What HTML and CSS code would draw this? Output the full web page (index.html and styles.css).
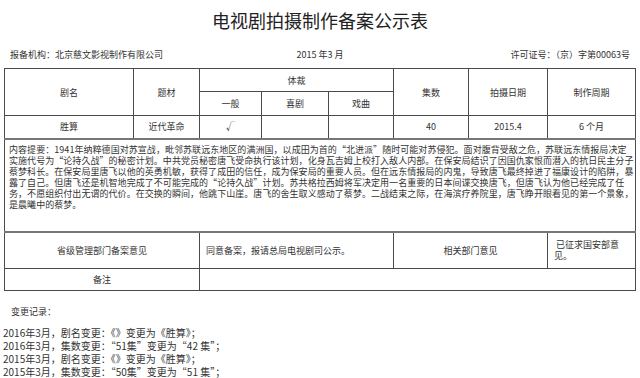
FILE: index.html
```html
<!DOCTYPE html>
<html>
<head>
<meta charset="utf-8">
<link rel="stylesheet" href="styles.css">
</head>
  <body>
    <div class="title">电视剧拍摄制作备案公示表</div>
    <div class="info">
      <span class="info-left">报备机构：北京慈文影视制作有限公司</span>
      <span class="info-mid">2015 年3 月</span>
      <span class="info-right">许可证号：（京）字第00063号</span>
    </div>
    <table class="record">
      <colgroup>
        <col class="c1"><col class="c2"><col class="c3"><col class="c4">
        <col class="c5"><col class="c6"><col class="c7"><col class="c8">
      </colgroup>
      <tr class="h1">
        <td rowspan="2">剧名</td>
        <td rowspan="2">题材</td>
        <td colspan="3">体裁</td>
        <td rowspan="2">集数</td>
        <td rowspan="2">拍摄日期</td>
        <td rowspan="2">制作周期</td>
      </tr>
      <tr class="h2">
        <td>一般</td>
        <td>喜剧</td>
        <td>戏曲</td>
      </tr>
      <tr class="data">
        <td>胜算</td>
        <td>近代革命</td>
        <td>√</td>
        <td></td>
        <td></td>
        <td>40</td>
        <td>2015.4</td>
        <td>6 个月</td>
      </tr>
      <tr class="summary">
        <td colspan="8">内容提要：1941年纳粹德国对苏宣战，毗邻苏联远东地区的满洲国，以成田为首的“北进派”随时可能对苏侵犯。面对腹背受敌之危，苏联远东情报局决定<br>实施代号为“论持久战”的秘密计划。中共党员秘密唐飞受命执行该计划，化身瓦吉姆上校打入敌人内部。在保安局结识了因国仇家恨而潜入的抗日民主分子<br>蔡梦科长。在保安局里唐飞以他的英勇机敏，获得了成田的信任，成为保安局的重要人员。但在远东情报局的内鬼，导致唐飞最终掉进了福康设计的陷阱，暴<br>露了自己。但唐飞还是机智地完成了不可能完成的“论持久战”计划。苏共格拉西姆将军决定用一名重要的日本间谍交换唐飞，但唐飞认为他已经完成了任<br>务，不愿组织付出无谓的代价。在交换的瞬间，他跳下山崖。唐飞的舍生取义感动了蔡梦。二战结束之际，在海滨疗养院里，唐飞睁开眼看见的第一个景象，<br>是晨曦中的蔡梦。</td>
      </tr>
      <tr class="opinion">
        <td colspan="2">省级管理部门备案意见</td>
        <td colspan="3" class="left">同意备案，报请总局电视剧司公示。</td>
        <td colspan="2">相关部门意见</td>
        <td class="left">&nbsp;已征求国安部意<br>见。</td>
      </tr>
      <tr class="note">
        <td colspan="2">备注</td>
        <td colspan="6"></td>
      </tr>
    </table>
    <div class="changes-head">变更记录：</div>
    <div class="changes">
      <p>2016年3月，剧名变更：《》变更为《胜算》；</p>
      <p>2016年3月，集数变更：“51集”变更为“42 集”；</p>
      <p>2015年3月，剧名变更：《》变更为《胜算》；</p>
      <p>2015年3月，集数变更：“50集”变更为“51 集”；</p>
    </div>
  </body>
</html>
```

FILE: styles.css
```css
body {
    margin: 0;
    background: #fff;
    color: #333;
    font-family: "Noto Sans CJK SC", "DejaVu Sans", sans-serif;
    font-size: 9px;
    line-height: 11px;
}

.title {
    padding-top: 9px;
    font-size: 18px;
    line-height: 22px;
    text-align: center;
    color: #222;
}

.info {
    display: grid;
    grid-template-columns: 1fr auto 1fr;
    margin-top: 17px;
    padding: 0 10px;
    line-height: 14px;
}

.info-right {
    text-align: right;
}

.record {
    margin: 6px 0 0 4px;
    width: 632px;
    table-layout: fixed;
    border-collapse: collapse;
    font: inherit;
}

.record col.c1 { width: 129px; }
.record col.c2 { width: 66px; }
.record col.c3 { width: 62px; }
.record col.c4 { width: 67px; }
.record col.c5 { width: 65px; }
.record col.c6 { width: 75px; }
.record col.c7 { width: 79px; }
.record col.c8 { width: 88px; }

.record td {
    border: 1px solid #4a4a4a;
    padding: 0 4px;
    text-align: center;
    vertical-align: middle;
}

.record td.left {
    text-align: left;
    padding-left: 6px;
}

.record .h1 { height: 23px; }
.record .h2 { height: 24px; }
.record .data { height: 23px; }

/* lines are broken by hand to follow the original wrap */
.record .summary td {
    height: 83px;
    padding: 4px 3px 4px 4px;
    letter-spacing: 0.05px;
    text-align: left;
    vertical-align: top;
    white-space: nowrap;
    overflow: hidden;
    border-top: 2px solid #777;
    border-bottom: 2px solid #777;
}

.record .opinion { height: 37px; }
.record .note { height: 22px; }

.changes-head {
    margin-top: 14px;
    padding-left: 11px;
    line-height: 14px;
}

.changes {
    margin-top: 7px;
    padding-left: 3px;
    font-size: 10px;
}

.changes p {
    margin: 0;
    line-height: 13px;
}
```
